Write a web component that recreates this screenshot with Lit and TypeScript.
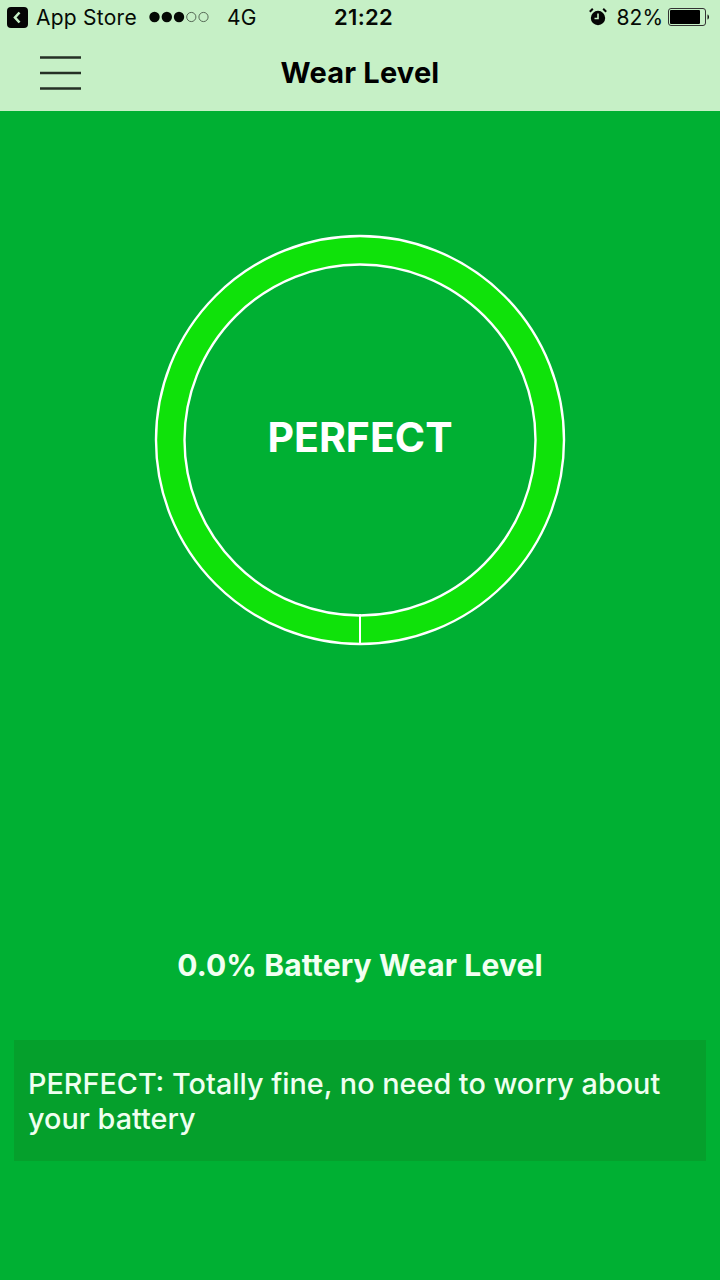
import { LitElement, html, css } from "lit";
import { customElement } from "lit/decorators.js";

@customElement("app-root")
export class AppRoot extends LitElement {
  static styles = css`
    :host {
      display: block;
      width: 720px;
      height: 1280px;
      overflow: hidden;
      background: #00b033;
      font-family: Inter, "Liberation Sans", sans-serif;
    }

    .top {
      height: 111px;
      background: #c6f0c6;
      color: #050a05;
      display: flex;
      flex-direction: column;
    }

    .status {
      height: 34px;
      display: grid;
      grid-template-columns: 1fr auto 1fr;
      align-items: center;
      font-size: 21px;
      letter-spacing: 0.25px;
      padding: 0 0 0 7px;
    }

    .status-left,
    .status-right {
      display: flex;
      align-items: center;
    }

    .status-right {
      justify-content: flex-end;
      padding-right: 9px;
    }

    .back {
      display: block;
      margin-right: 8px;
    }

    .dots {
      display: block;
      margin: 0 18px 0 12px;
    }

    .time {
      font-weight: 600;
      font-size: 22px;
      letter-spacing: 0.3px;
    }

    .pct {
      margin: 0 5px 0 10px;
      letter-spacing: 0;
    }

    .nav {
      flex: 1;
      display: grid;
      grid-template-columns: 1fr auto 1fr;
      align-items: center;
    }

    .menu {
      display: block;
      margin-left: 40px;
    }

    .title {
      font-size: 29px;
      font-weight: 700;
      letter-spacing: 0.2px;
      color: #000;
    }

    .gauge {
      display: grid;
      justify-content: center;
      align-items: center;
      justify-items: center;
      margin-top: 122px;
    }

    .gauge > * {
      grid-area: 1 / 1;
    }

    .gauge svg {
      display: block;
    }

    .state {
      font-size: 41px;
      font-weight: 700;
      color: #fff;
      margin-top: -7px;
    }

    .wear {
      margin-top: 298px;
      text-align: center;
      font-size: 30px;
      line-height: 40px;
      font-weight: 700;
      letter-spacing: 0.15px;
      color: #f2fff2;
    }

    .note {
      margin: 55px 14px 0;
      height: 121px;
      box-sizing: border-box;
      padding: 26px 14px 0 14px;
      background: #05a02c;
      color: #effff0;
      font-size: 28.8px;
      line-height: 35px;
      font-weight: 500;
    }
  `;

  render() {
    return html`
      <div class="top">
        <div class="status">
          <div class="status-left">
            <svg class="back" width="21" height="21" viewBox="0 0 21 21">
              <rect width="21" height="21" rx="4" fill="#050505" />
              <path d="M12.5 5.5 8 10.5l4.5 5" fill="none" stroke="#c6f0c6" stroke-width="2.6" />
            </svg>
            <span>App Store</span>
            <svg class="dots" width="60" height="14" viewBox="0 0 60 14">
              <circle cx="5.5" cy="7" r="5.2" fill="#050a05" />
              <circle cx="17.8" cy="7" r="5.2" fill="#050a05" />
              <circle cx="30" cy="7" r="5.2" fill="#050a05" />
              <circle cx="42.3" cy="7" r="4.6" fill="none" stroke="#4a5a4a" stroke-width="0.9" />
              <circle cx="54.5" cy="7" r="4.6" fill="none" stroke="#4a5a4a" stroke-width="0.9" />
            </svg>
            <span>4G</span>
          </div>
          <div class="time">21:22</div>
          <div class="status-right">
            <svg width="18" height="18" viewBox="0 0 18 18">
              <circle cx="9" cy="10" r="7.2" fill="#050505" />
              <path d="M9 5.5V10.5H5.5" fill="none" stroke="#c6f0c6" stroke-width="1.6" />
              <path d="M0.8 3.8 3.8 0.8M17.2 3.8 14.2 0.8" stroke="#050505" stroke-width="2" />
            </svg>
            <span class="pct">82%</span>
            <svg width="43" height="18" viewBox="0 0 43 18">
              <rect x="0.5" y="0.5" width="37" height="17" rx="2.5" fill="none" stroke="#333" />
              <rect x="2" y="2" width="30" height="14" rx="1" fill="#000" />
              <path d="M39.5 6.5c2 .4 2 4.6 0 5z" fill="#111" />
            </svg>
          </div>
        </div>
        <div class="nav">
          <svg class="menu" width="42" height="36" viewBox="0 0 42 36">
            <path d="M0 2.5H41M0 18H41M0 33.5H41" stroke="#243024" stroke-width="2.4" />
          </svg>
          <div class="title">Wear Level</div>
          <div></div>
        </div>
      </div>
      <div class="gauge">
        <svg width="414" height="414" viewBox="0 0 414 414">
          <circle cx="207" cy="207" r="190" fill="none" stroke="#0fe20a" stroke-width="29" />
          <circle cx="207" cy="207" r="204" fill="none" stroke="#fff" stroke-width="2.4" />
          <circle cx="207" cy="207" r="175.5" fill="none" stroke="#fff" stroke-width="2.4" />
          <path d="M207 381V411" stroke="#fff" stroke-width="2" />
        </svg>
        <div class="state">PERFECT</div>
      </div>
      <div class="wear">0.0% Battery Wear Level</div>
      <div class="note">PERFECT: Totally fine, no need to worry about your battery</div>
    `;
  }
}
